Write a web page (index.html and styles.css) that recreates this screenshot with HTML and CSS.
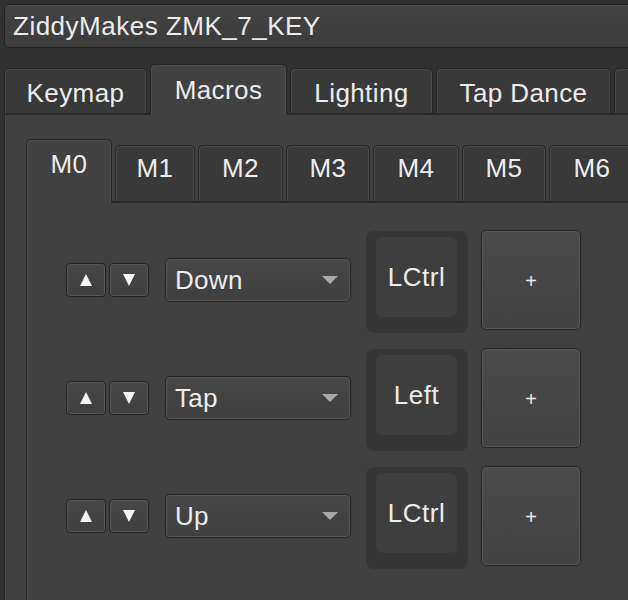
FILE: index.html
```html
<!DOCTYPE html>
<html>
<head>
<meta charset="utf-8">
<link rel="stylesheet" href="styles.css">
</head>
<body>
<div class="window">
  <div class="titlebox"><span class="title">ZiddyMakes ZMK_7_KEY</span></div>
  <div class="tabs">
    <div class="tab w1">Keymap</div>
    <div class="tab sel w2">Macros</div>
    <div class="tab w3">Lighting</div>
    <div class="tab w4">Tap Dance</div>
    <div class="tab w5"></div>
  </div>
  <div class="pane">
    <div class="itabs">
      <div class="itab isel">M0</div>
      <div class="itab m1">M1</div>
      <div class="itab m2">M2</div>
      <div class="itab m3">M3</div>
      <div class="itab m4">M4</div>
      <div class="itab m5">M5</div>
      <div class="itab m6">M6</div>
    </div>
    <div class="ipane">
      <div class="row">
        <div class="arrows">
          <div class="abtn"><span class="tri up"></span></div>
          <div class="abtn"><span class="tri down"></span></div>
        </div>
        <div class="combo"><span>Down</span><span class="caret"></span></div>
        <div class="key"><div class="cap">LCtrl</div></div>
        <div class="plus">+</div>
      </div>
      <div class="row">
        <div class="arrows">
          <div class="abtn"><span class="tri up"></span></div>
          <div class="abtn"><span class="tri down"></span></div>
        </div>
        <div class="combo"><span>Tap</span><span class="caret"></span></div>
        <div class="key"><div class="cap">Left</div></div>
        <div class="plus">+</div>
      </div>
      <div class="row">
        <div class="arrows">
          <div class="abtn"><span class="tri up"></span></div>
          <div class="abtn"><span class="tri down"></span></div>
        </div>
        <div class="combo"><span>Up</span><span class="caret"></span></div>
        <div class="key"><div class="cap">LCtrl</div></div>
        <div class="plus">+</div>
      </div>
    </div>
  </div>
</div>
</body>
</html>
```
FILE: styles.css
```css
html, body {
  margin: 0;
  padding: 0;
  background: #323232;
  width: 628px;
  height: 600px;
  overflow: hidden;
  font-family: "Liberation Sans", Arial, sans-serif;
  color: #ececec;
}
.window {
  width: 628px;
  height: 600px;
  overflow: hidden;
  padding-top: 4px;
  box-sizing: border-box;
}
.titlebox {
  margin-left: 4px;
  width: 650px;
  height: 44px;
  box-sizing: border-box;
  border: 1px solid #242424;
  border-radius: 5px;
  background: linear-gradient(#434343, #3c3c3c);
  box-shadow: inset 0 1px 0 #4c4c4c;
  display: flex;
  align-items: center;
  padding-left: 8px;
  font-size: 26px;
}
.title { letter-spacing: 0.5px; }
.tabs {
  margin-top: 16px;
  display: flex;
  align-items: flex-end;
  gap: 3px;
  padding-left: 4px;
  height: 51px;
  position: relative;
  z-index: 2;
}
.tab {
  height: 45px;
  box-sizing: border-box;
  border: 1px solid #262626;
  border-bottom: none;
  border-radius: 5px 5px 0 0;
  background: #393939;
  box-shadow: inset 1px 1px 0 #4a4a4a, inset -1px 0 0 #4a4a4a;
  display: flex;
  align-items: center;
  justify-content: center;
  padding-top: 4px;
  font-size: 26px;
  letter-spacing: 0.4px;
  flex: none;
  margin-bottom: 2px;
}
.tab.sel {
  height: 51px;
  margin-bottom: 0;
  background: #414141;
  padding-top: 0;
  padding-bottom: 0;
  box-shadow: inset 1px 1px 0 #4c4c4c, inset -1px 0 0 #4c4c4c;
}
.w1 { width: 143px; }
.w2 { width: 137px; }
.w3 { width: 143px; }
.w4 { width: 175px; }
.w5 { width: 40px; }
.pane {
  margin-left: 4px;
  margin-top: -2px;
  height: 500px;
  box-sizing: border-box;
  border-top: 2px solid #2a2a2a;
  border-left: 1px solid #2a2a2a;
  background: #404040;
  padding-top: 24px;
  padding-left: 21px;
  box-shadow: inset 1px 0 0 #4a4a4a;
}
.itabs {
  display: flex;
  align-items: flex-end;
  gap: 3px;
  height: 64px;
  position: relative;
  z-index: 2;
}
.itab {
  height: 56px;
  box-sizing: border-box;
  border: 1px solid #262626;
  border-bottom: none;
  border-radius: 5px 5px 0 0;
  background: #393939;
  box-shadow: inset 1px 1px 0 #4a4a4a, inset -1px 0 0 #4a4a4a;
  display: flex;
  align-items: center;
  justify-content: center;
  font-size: 26px;
  letter-spacing: 0.4px;
  flex: none;
  padding-bottom: 10px;
  margin-bottom: 2px;
}
.m1 { width: 80px; }
.m2 { width: 85px; }
.m3 { width: 84px; }
.m4 { width: 86px; }
.m5 { width: 84px; }
.m6 { width: 86px; }
.itab.isel {
  width: 86px;
  height: 64px;
  margin-bottom: 0;
  background: #414141;
  padding-bottom: 14px;
  box-shadow: inset 1px 1px 0 #4c4c4c, inset -1px 0 0 #4c4c4c;
}
.ipane {
  margin-top: -2px;
  height: 420px;
  box-sizing: border-box;
  border-top: 2px solid #2a2a2a;
  border-left: 1px solid #2a2a2a;
  background: #404040;
  box-shadow: inset 1px 0 0 #4c4c4c;
  padding-top: 25px;
  padding-left: 39px;
  display: flex;
  flex-direction: column;
  gap: 14px;
}
.row {
  display: flex;
  align-items: center;
  height: 104px;
}
.arrows {
  display: flex;
  gap: 3px;
  margin-right: 16px;
}
.abtn {
  width: 40px;
  height: 34px;
  box-sizing: border-box;
  border: 1px solid #242424;
  border-radius: 4px;
  background: linear-gradient(#474747, #3f3f3f);
  box-shadow: inset 0 0 0 1px #555;
  display: flex;
  align-items: center;
  justify-content: center;
}
.tri {
  width: 0;
  height: 0;
  border-left: 6px solid transparent;
  border-right: 6px solid transparent;
}
.tri.up { border-bottom: 12px solid #f4f4f4; }
.tri.down { border-top: 12px solid #f4f4f4; }
.combo {
  width: 186px;
  height: 44px;
  box-sizing: border-box;
  border: 1px solid #242424;
  border-radius: 5px;
  background: linear-gradient(#474747, #3f3f3f);
  box-shadow: inset 0 0 0 1px #555;
  display: flex;
  align-items: center;
  justify-content: space-between;
  padding: 0 12px 0 9px;
  font-size: 26px;
  letter-spacing: 0.3px;
  margin-right: 15px;
}
.caret {
  width: 0;
  height: 0;
  border-left: 8px solid transparent;
  border-right: 8px solid transparent;
  border-top: 8px solid #a8a8a8;
}
.key {
  width: 102px;
  height: 102px;
  box-sizing: border-box;
  background: #363636;
  border-radius: 8px;
  padding: 6px 11px 16px 10px;
  margin-right: 13px;
  margin-top: 4px;
}
.cap {
  width: 81px;
  height: 80px;
  background: #3e3e3e;
  border-radius: 7px;
  display: flex;
  align-items: center;
  justify-content: center;
  font-size: 26px;
  letter-spacing: 0.5px;
}
.plus {
  width: 100px;
  height: 100px;
  box-sizing: border-box;
  border: 1px solid #242424;
  border-radius: 5px;
  background: linear-gradient(#4a4a4a, #424242);
  box-shadow: inset 0 0 0 1px #585858;
  display: flex;
  align-items: center;
  justify-content: center;
  font-size: 20px;
  padding-top: 2px;
}
```
